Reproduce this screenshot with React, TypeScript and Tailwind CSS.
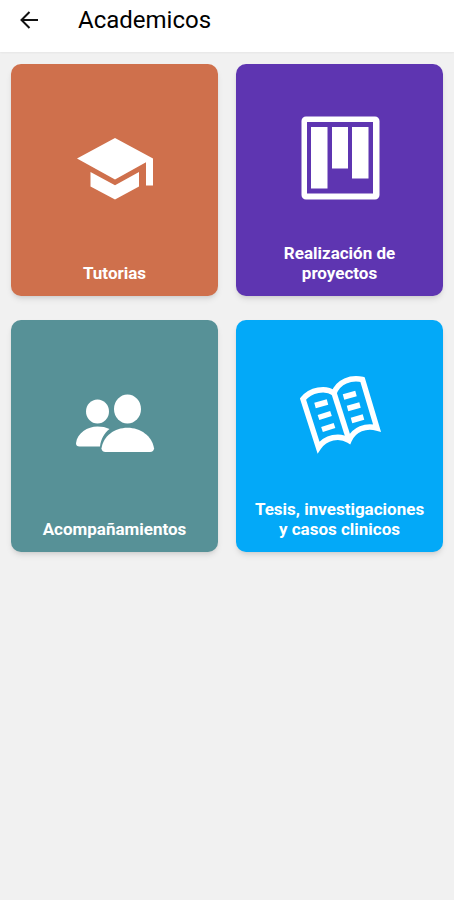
import React from "react";

type CardProps = {
  title: string;
  color: string;
  icon: React.ReactNode;
};

const GraduationIcon = () => (
  <svg width="85" height="84" viewBox="-0.5 0 85 84" fill="white" aria-hidden="true">
    <path d="M42.5 22 4.5 42.5l38 21L73.5 46.2V69.5H80.5V42.5Z" />
    <path d="M18 56v14.5L42.5 83.5 66.5 70.5V56l-24 13.2Z" />
  </svg>
);

const BoardIcon = () => (
  <svg width="85" height="84" viewBox="-0.5 0 85 84" fill="white" aria-hidden="true">
    <path
      fillRule="evenodd"
      d="M8.5.5h69a4.500 4.500 0 0 1 4.500 4.500v74a4.500 4.500 0 0 1-4.500 4.500h-69A4.500 4.500 0 0 1 4 79V5A4.500 4.500 0 0 1 8.500.5ZM9.500 6v71.500h66V6Z"
    />
    <path d="M13.500 11H30v61.500H13.500ZM34.500 11h16v41.500h-16ZM54.500 11H71v51.500H54.500Z" />
  </svg>
);

const PeopleIcon = () => (
  <svg width="85" height="84" viewBox="-0.5 0 85 84" fill="white" aria-hidden="true">
    <ellipse cx="25" cy="39.5" rx="11.5" ry="12" />
    <ellipse cx="55" cy="37" rx="13.5" ry="14.5" />
    <path d="M7 74.5c-2.200 0-3.500-1.200-3.500-3.300C4.800 61 15 54.500 25 54.500c4.500 0 8.500.8 12 2.500-5 4-8.500 9.500-9.500 17.500Z" />
    <path d="M33 80c-2.500 0-4-1.500-4-3.800C31 64 42 55.800 55 55.800S79.500 64 81.500 76.200c0 2.300-1.500 3.800-4 3.800Z" />
  </svg>
);

const BookIcon = () => (
  <svg
    width="85"
    height="84"
    viewBox="-0.5 0 85 84"
    fill="none"
    stroke="white"
    strokeWidth="5.5"
    aria-hidden="true"
  >
    <path d="M5.5 27C13 17.500 28 15 36.500 21 41 9.500 53 5 65 7.500L79.500 56C68.500 53 56.500 57 51.500 68.500 42 62.500 28 65 21 75.500Z" />
    <path d="M36.500 21 51.500 68" />
    <path d="M17.500 33.500 30 30M21 45.500 33.500 41.500M24.500 57.500 37 53.500M46 25 58.500 21.500M50 36.500 62.500 33M54 48.500 66 45" />
  </svg>
);

const cards: CardProps[] = [
  { title: "Tutorias", color: "bg-[#cf704c]", icon: <GraduationIcon /> },
  { title: "Realización de proyectos", color: "bg-[#5e35b1]", icon: <BoardIcon /> },
  { title: "Acompañamientos", color: "bg-[#579197]", icon: <PeopleIcon /> },
  {
    title: "Tesis, investigaciones y casos clinicos",
    color: "bg-[#03a9f8]",
    icon: <BookIcon />,
  },
];

function CategoryCard({ title, color, icon }: CardProps) {
  return (
    <button
      type="button"
      className={`${color} flex h-58 flex-col items-center justify-between rounded-[10px] px-4 pt-13 pb-[13px] shadow-md`}
    >
      {icon}
      <span className="text-center text-[17px] leading-5 font-bold text-white">
        {title}
      </span>
    </button>
  );
}

function App() {
  return (
    <div className="min-h-screen bg-[#f1f1f1] font-['Roboto',sans-serif]">
      {/* Header */}
      <header className="flex items-center gap-10 bg-white px-5 pt-1 pb-4 shadow-xs">
        <button type="button" aria-label="Volver">
          <svg
            width="18"
            height="18"
            viewBox="0 0 18 18"
            fill="none"
            stroke="#111"
            strokeWidth="2"
            className="block"
          >
            <path d="M18 9H2M9.5 1 1.5 9l8 8" />
          </svg>
        </button>
        <h1 className="text-2xl leading-8 text-black">Academicos</h1>
      </header>

      {/* Categories */}
      <main className="grid grid-cols-2 gap-x-[18px] gap-y-6 px-[11px] py-3">
        {cards.map((card) => (
          <CategoryCard key={card.title} {...card} />
        ))}
      </main>
    </div>
  );
}

export default App;
